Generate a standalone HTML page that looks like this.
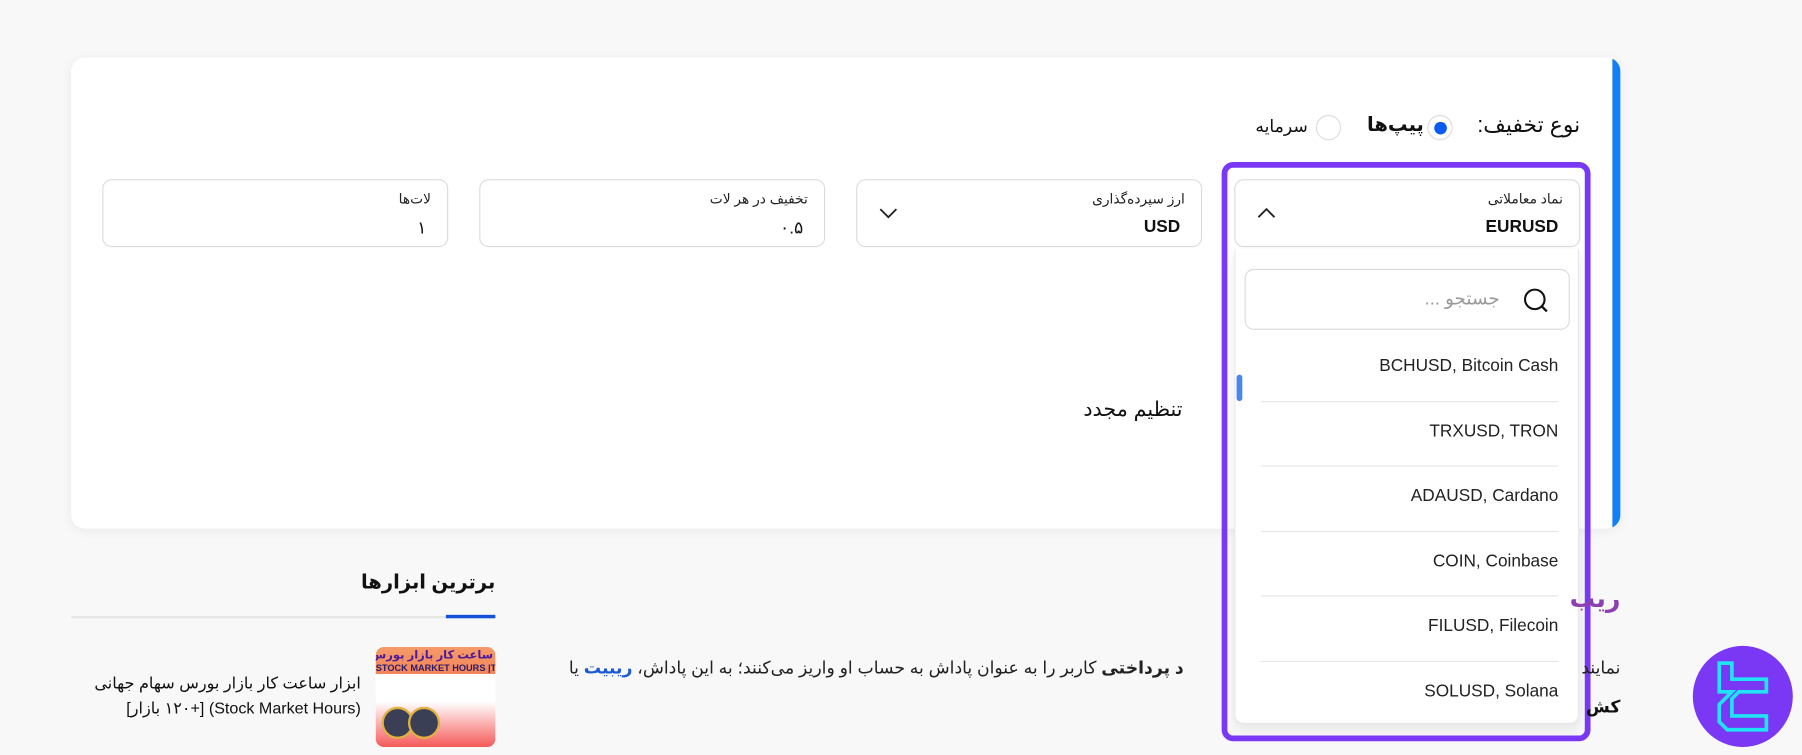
<!DOCTYPE html>
<html><head><meta charset="utf-8"><style>
*{margin:0;padding:0;box-sizing:border-box}
html,body{width:1802px;height:755px;overflow:hidden;background:#f8f8f8}
body{font-family:"Liberation Sans","Noto Sans CJK SC","DejaVu Sans",sans-serif;color:#111}
#w{position:absolute;left:0;top:0;width:1568px;height:657px;transform:scale(1.14923);transform-origin:0 0}
.a{position:absolute}
.card{left:62px;top:50px;width:1348px;height:410px;background:#fff;border-radius:12px;box-shadow:0 2px 10px rgba(0,0,0,.06);overflow:hidden}
.bar{right:0;top:0;width:7px;height:100%;background:#137ff5}
.fld{position:absolute;top:156px;width:301px;height:59px;border:1px solid #dcdcdc;border-radius:8px;background:#fff}
.lbl{position:absolute;right:14px;top:9px;font-size:12px;color:#222;direction:rtl}
.val{position:absolute;right:18px;top:32px;font-size:15px;color:#111;direction:rtl}
.t{direction:rtl;white-space:nowrap;text-align:right}
.item{position:absolute;right:17px;font-size:15px;color:#222}
.sep{position:absolute;left:22px;right:17px;height:1px;background:#e6e6e6}
</style></head><body><div id="w">
<div class="a card"><div class="a bar"></div></div>

<div class="a t" style="right:193px;top:98px;font-size:19px;">نوع تخفیف:</div>
<div class="a" style="left:1242px;top:100px;width:22px;height:22px;border-radius:50%;border:1px solid #ddd;background:#fff"><div style="margin:5px;width:11px;height:11px;border-radius:50%;background:#0a5cf0"></div></div>
<div class="a t" style="right:329px;top:99px;font-size:17px;font-weight:bold">پیپ‌ها</div>
<div class="a" style="left:1145px;top:100px;width:22px;height:22px;border-radius:50%;border:1px solid #ddd;background:#fff"></div>
<div class="a t" style="right:430px;top:101px;font-size:15px;">سرمایه</div>

<div class="fld" style="left:89px"><div class="lbl">لات‌ها</div><div class="val">۱</div></div>
<div class="fld" style="left:417px"><div class="lbl">تخفیف در هر لات</div><div class="val">۰.۵</div></div>
<div class="fld" style="left:745px"><div class="lbl">ارز سپرده‌گذاری</div><div class="val" style="font-weight:bold">USD</div>
<svg class="a" style="left:18px;top:22px" width="18" height="12" viewBox="0 0 18 12"><path d="M2 3 L9 10 L16 3" fill="none" stroke="#222" stroke-width="1.6"/></svg></div>
<div class="fld" style="left:1074px"><div class="lbl">نماد معاملاتی</div><div class="val" style="font-weight:bold">EURUSD</div>
<svg class="a" style="left:18px;top:22px" width="18" height="12" viewBox="0 0 18 12"><path d="M2 10 L9 3 L16 10" fill="none" stroke="#222" stroke-width="1.6"/></svg></div>

<div class="a t" style="right:539px;top:346px;font-size:18px;">تنظیم مجدد</div>

<!-- dropdown -->
<div class="a" style="left:1074px;top:217px;width:300px;height:413px;background:#fff;border:1px solid #e8e8e8;border-top:none;border-radius:0 0 8px 8px;box-shadow:0 4px 10px rgba(0,0,0,.08)">
 <div class="a" style="left:8px;top:17px;width:283px;height:53px;border:1px solid #dcdcdc;border-radius:8px">
  <div class="a t" style="right:60px;top:15px;font-size:16px;color:#999">جستجو ...</div>
  <svg class="a" style="right:16px;top:15px" width="24" height="24" viewBox="0 0 24 24"><circle cx="10.5" cy="10.5" r="8.5" fill="none" stroke="#111" stroke-width="1.8"/><path d="M17 17 L21 21" stroke="#111" stroke-width="2"/></svg>
 </div>
 <div class="a" style="left:1px;top:109px;width:5px;height:23px;border-radius:3px;background:#4a86f0"></div>
 <div class="item" style="top:93px">BCHUSD, Bitcoin Cash</div>
 <div class="sep" style="top:132px"></div>
 <div class="item" style="top:150px">TRXUSD, TRON</div>
 <div class="sep" style="top:188px"></div>
 <div class="item" style="top:206px">ADAUSD, Cardano</div>
 <div class="sep" style="top:245px"></div>
 <div class="item" style="top:263px">COIN, Coinbase</div>
 <div class="sep" style="top:301px"></div>
 <div class="item" style="top:319px">FILUSD, Filecoin</div>
 <div class="sep" style="top:358px"></div>
 <div class="item" style="top:376px">SOLUSD, Solana</div>
</div>
<div class="a" style="left:1063px;top:141px;width:321px;height:504px;border:5px solid #7a38f5;border-radius:10px"></div>

<!-- bottom -->
<div class="a t" style="right:1137px;top:497px;font-size:17px;font-weight:bold">برترین ابزارها</div>
<div class="a" style="left:62px;top:536px;width:369px;height:2px;background:#e6e6e6"></div>
<div class="a" style="left:388px;top:535px;width:43px;height:3px;background:#1452d6"></div>
<div class="a" style="left:327px;top:563px;width:104px;height:87px;border-radius:7px;overflow:hidden;background:linear-gradient(#f59a6a 0,#f3855a 27%,#fff 27%,#fff 55%,#f55a5a 100%)">
 <div class="a t" style="right:2px;top:2px;font-size:10px;font-weight:bold;color:#4a1a9a">ساعت کار بازار بورس سهام جهانی</div>
 <div class="a" style="left:0;top:14px;font-size:8px;font-weight:bold;color:#2a1a6a;white-space:nowrap">STOCK MARKET HOURS |TFLAB</div>
 <div class="a" style="left:5px;top:52px;width:28px;height:28px;border-radius:50%;background:#3a3f55;border:2px solid #e0b040"></div>
 <div class="a" style="left:28px;top:52px;width:28px;height:28px;border-radius:50%;background:#3a3f55;border:2px solid #e0b040"></div>
</div>
<div class="a t" style="right:1254px;top:583px;font-size:14px;line-height:22px;">ابزار ساعت کار بازار بورس سهام جهانی<br>(Stock Market Hours) [+۱۲۰ بازار]</div>

<div class="a t" style="right:158px;top:508px;font-size:22px;font-weight:bold;color:#8b3fb0">ریب</div>
<div class="a t" style="right:158px;top:572px;font-size:15px;color:#222">نمایند</div>
<div class="a t" style="right:538px;top:572px;font-size:15px;color:#222"><b>د پرداختی</b> کاربر را به عنوان پاداش به حساب او واریز می‌کنند؛ به این پاداش، <b style="color:#1a5ad6">ریبیت</b> یا</div>
<div class="a t" style="right:158px;top:606px;font-size:15px;font-weight:bold">کش</div>

<div class="a" style="left:1473px;top:562px;width:87px;height:88px;border-radius:50%;background:#7a38f5">
<svg class="a" style="left:0;top:0" width="87" height="88" viewBox="0 0 87 88"><path d="M23 15 H34 V29 H64 V40 H40 L34 46 V61 H64 V73 H30 L23 66 V51 L33 41 L34 40 H23 Z" fill="none" stroke="#1fe4f5" stroke-width="3.2" stroke-linejoin="miter"/></svg>
</div>
</div></body></html>
